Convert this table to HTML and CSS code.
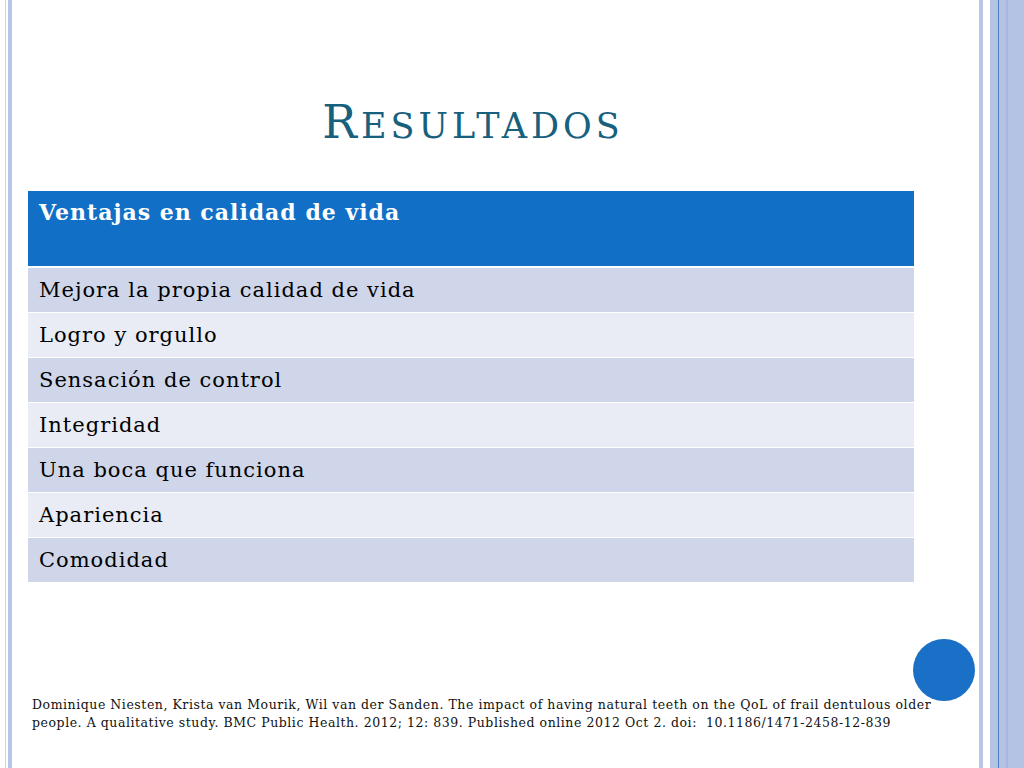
FILE: index.html
```html
<!DOCTYPE html>
<html lang="es">
<head>
<meta charset="utf-8">
<title>Resultados</title>
<link rel="stylesheet" href="styles.css">
</head>
<body>
<div class="slide">
  <div class="content">
    <h1 class="title"><span class="cap">R</span><span class="sc">ESULTADOS</span></h1>
    <div class="table">
      <div class="row head">Ventajas en calidad de vida</div>
      <div class="row dark">Mejora la propia calidad de vida</div>
      <div class="row light">Logro y orgullo</div>
      <div class="row dark">Sensación de control</div>
      <div class="row light">Integridad</div>
      <div class="row dark">Una boca que funciona</div>
      <div class="row light">Apariencia</div>
      <div class="row dark">Comodidad</div>
    </div>
    <p class="cite">Dominique Niesten, Krista van Mourik, Wil van der Sanden. The impact of having natural teeth on the QoL of frail dentulous older people. A qualitative study. BMC Public Health. 2012; 12: 839. Published online 2012 Oct 2. doi:&nbsp; 10.1186/1471-2458-12-839</p>
  </div>
  <div class="dot"></div>
</div>
</body>
</html>
```
FILE: styles.css
```css
html, body {
  margin: 0;
  padding: 0;
}
body {
  width: 1024px;
  height: 768px;
  overflow: hidden;
  background: #ffffff;
}
.slide {
  position: relative;
  width: 1024px;
  height: 768px;
  background:
    linear-gradient(to right,
      #ffffff 0, #ffffff 5px,
      #c9d5ec 5px, #c9d5ec 6px,
      #ffffff 6px, #ffffff 8px,
      #b6c6e6 8px, #b6c6e6 12px,
      transparent 12px),
    linear-gradient(to right,
      transparent 979px,
      #b8c7e6 979px, #b8c7e6 983px,
      #ffffff 983px, #ffffff 990px,
      #b4c3e3 990px, #b4c3e3 998px,
      #4d7cc9 998px, #4d7cc9 999px,
      #b4c3e3 999px, #b4c3e3 1006px,
      #a9b6e2 1006px, #a9b6e2 1008px,
      #b4c3e3 1008px, #b4c3e3 1024px);
}
.content {
  width: 886px;
  padding-left: 28px;
  display: flex;
  flex-direction: column;
}
.title {
  margin: 0;
  padding-top: 95px;
  padding-left: 4px;
  height: 191px;
  box-sizing: border-box;
  font-family: "DejaVu Serif", serif;
  font-weight: normal;
  font-size: 46px;
  line-height: 54px;
  color: #17607e;
  text-align: center;
  letter-spacing: 4px;
}
.title .sc {
  font-size: 35px;
}
.table {
  display: flex;
  flex-direction: column;
  gap: 1px;
}
.row {
  height: 44px;
  box-sizing: border-box;
  padding: 10px 11px 0;
  font-family: "DejaVu Serif", serif;
  font-size: 21px;
  line-height: 25px;
  letter-spacing: 1px;
  color: #000000;
}
.row.head {
  height: 76px;
  background: #1170c6;
  color: #ffffff;
  font-weight: bold;
  font-size: 22px;
  padding-top: 9px;
  border-bottom: 1px solid #ffffff;
}
.row.dark { background: #cfd6ea; }
.row.light { background: #e9ecf5; }
.cite {
  margin: 114px 0 0 4px;
  width: 906px;
  font-family: "DejaVu Serif", serif;
  font-size: 12.5px;
  line-height: 18px;
  letter-spacing: 0.55px;
  color: #111111;
}
.dot {
  position: absolute;
  left: 913px;
  top: 639px;
  width: 62px;
  height: 62px;
  border-radius: 50%;
  background: #1a6fc6;
}
```
